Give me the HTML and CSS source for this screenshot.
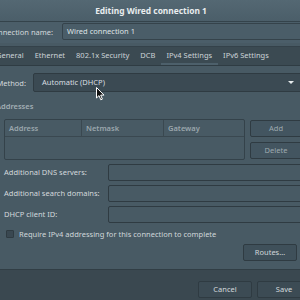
FILE: index.html
```html
<!DOCTYPE html>
<html>
<head>
<meta charset="utf-8">
<link rel="stylesheet" href="styles.css">
</head>
<body>
<div class="dialog">
  <div class="titlebar">Editing Wired connection 1</div>
  <div class="name-row">
    <span class="name-label">Connection name:</span>
    <div class="entry">Wired connection 1</div>
  </div>
  <div class="tabs">
    <span class="tab">General</span>
    <span class="tab">Ethernet</span>
    <span class="tab">802.1x Security</span>
    <span class="tab">DCB</span>
    <span class="tab active">IPv4 Settings</span>
    <span class="tab">IPv6 Settings</span>
  </div>
  <div class="page">
    <div class="method-row">
      <span class="method-label">Method:</span>
      <div class="combo">Automatic (DHCP)<span class="arrow"></span></div>
    </div>
    <div class="frame-label">Addresses</div>
    <div class="addr-row">
      <div class="table">
        <div class="thead">
          <span class="th c1">Address</span>
          <span class="th c2">Netmask</span>
          <span class="th c3">Gateway</span>
        </div>
      </div>
      <div class="side-btns">
        <div class="btn">Add</div>
        <div class="btn">Delete</div>
      </div>
    </div>
    <div class="form-grid">
      <span class="flabel">Additional DNS servers:</span><div class="field"></div>
      <span class="flabel">Additional search domains:</span><div class="field"></div>
      <span class="flabel">DHCP client ID:</span><div class="field"></div>
    </div>
    <div class="check-row">
      <span class="checkbox"></span>
      <span class="check-text">Require IPv4 addressing for this connection to complete</span>
    </div>
    <div class="routes-row">
      <div class="btn routes">Routes…</div>
    </div>
  </div>
  <div class="actions">
    <div class="btn action">Cancel</div>
    <div class="btn action">Save</div>
  </div>
</div>
<svg class="cursor" width="9" height="14" viewBox="0 0 9 14">
  <path d="M0.5 0.5 L0.5 11 L3 8.6 L4.8 12.8 L6.4 12.1 L4.7 8.1 L8 8.1 Z" fill="#111" stroke="#fff" stroke-width="1"/>
</svg>
</body>
</html>
```
FILE: styles.css
```css
html, body {
  margin: 0;
  padding: 0;
  width: 300px;
  height: 300px;
  overflow: hidden;
  background: #485a64;
  font-family: "Noto Sans", "Open Sans", sans-serif;
  font-size: 7.5px;
  color: #d3d9dc;
}

.dialog {
  width: 326px;
  margin-left: -12px;
  background: #485a64;
  display: flex;
  flex-direction: column;
}

.titlebar {
  height: 22px;
  line-height: 21px;
  text-align: center;
  font-weight: 700;
  font-size: 8.4px;
  color: #e9edef;
  background: linear-gradient(#546873, #4b5e69);
  border-bottom: 1px solid #34434b;
  box-sizing: border-box;
}

.name-row {
  display: flex;
  align-items: center;
  padding: 1px 0 3px 0;
  background: #4b5e69;
}

.name-label {
  width: 65px;
  text-align: right;
  margin-right: 9px;
  white-space: nowrap;
}

.entry {
  flex: 1;
  height: 17px;
  box-sizing: border-box;
  border: 1px solid #35434b;
  border-radius: 2px;
  background: #4a5d68;
  padding-left: 4px;
  line-height: 15px;
  color: #dfe4e6;
}

.tabs {
  display: flex;
  height: 20px;
  margin-top: 3px;
  background: #3b4a52;
  border-top: 1px solid #34424a;
  border-bottom: 1px solid #2f3c43;
  box-sizing: border-box;
  padding-left: 2.5px;
}

.tab {
  padding: 0 5.5px;
  line-height: 17px;
  white-space: nowrap;
  color: #ccd3d7;
  border-bottom: 2px solid transparent;
}

.tab.active {
  border-bottom-color: #4d606b;
}

.page {
  padding: 7px 12px 8px 16px;
  background: #485a64;
}

.method-row {
  display: flex;
  align-items: center;
}

.method-label {
  width: 30px;
  margin-left: -8px;
  margin-right: 7px;
  text-align: right;
}

.combo {
  flex: 1;
  height: 19px;
  box-sizing: border-box;
  border: 1px solid #2f3b42;
  border-radius: 2px;
  background: #3b4a53;
  padding-left: 8px;
  line-height: 17px;
  color: #d8dee1;
  display: flex;
  justify-content: space-between;
  align-items: center;
}

.arrow {
  width: 0;
  height: 0;
  margin-right: 7px;
  border-left: 3px solid transparent;
  border-right: 3px solid transparent;
  border-top: 3px solid #e8ecee;
}

.frame-label {
  margin: 8px 0 7px -8px;
  line-height: 12px;
  font-weight: 600;
  color: #a3afb5;
}

.addr-row {
  display: flex;
  gap: 5px;
}

.table {
  width: 241px;
  height: 41px;
  box-sizing: border-box;
  border: 1px solid #34424a;
  border-radius: 2px;
  background: #485a64;
}

.thead {
  display: grid;
  grid-template-columns: 77px 82px 1fr;
  height: 16px;
  border-bottom: 1px solid #3a4850;
}

.th {
  padding-left: 4px;
  line-height: 16px;
  color: #9ba7ad;
  font-weight: 600;
}

.c1, .c2 {
  border-right: 1px solid #3a4850;
}

.side-btns {
  flex: 1;
  display: flex;
  flex-direction: column;
  gap: 5px;
  padding-top: 1px;
}

.btn {
  height: 17px;
  box-sizing: border-box;
  border: 1px solid #2f3b42;
  border-radius: 2px;
  background: #435560;
  text-align: center;
  line-height: 15px;
  color: #9eaab0;
}

.form-grid {
  display: grid;
  grid-template-columns: 100px 1fr;
  column-gap: 4px;
  row-gap: 4px;
  margin-top: 4px;
}

.flabel {
  line-height: 17px;
  white-space: nowrap;
}

.field {
  height: 17px;
  box-sizing: border-box;
  border: 1px solid #2f3b42;
  border-radius: 2px;
  background: #485a64;
}

.check-row {
  display: flex;
  align-items: center;
  gap: 5px;
  margin-top: 5px;
  margin-left: 2px;
  height: 12px;
}

.checkbox {
  width: 8px;
  height: 8px;
  box-sizing: border-box;
  border: 1px solid #2f3b42;
  border-radius: 1px;
  background: #3a4851;
}

.check-text {
  white-space: nowrap;
  color: #d0d7da;
}

.routes-row {
  display: flex;
  justify-content: flex-end;
  margin-top: 4px;
}

.btn.routes {
  width: 54px;
  margin-right: 5px;
  color: #d0d7da;
  background: #3f505a;
}

.actions {
  display: flex;
  justify-content: flex-end;
  gap: 5px;
  padding: 11px 3px 10px 0;
  background: #3a4850;
  border-top: 1px solid #313e45;
}

.btn.action {
  width: 54px;
  color: #d3d9dc;
  background: #3c4b54;
}

.cursor {
  position: absolute;
  left: 96px;
  top: 87px;
}
```
